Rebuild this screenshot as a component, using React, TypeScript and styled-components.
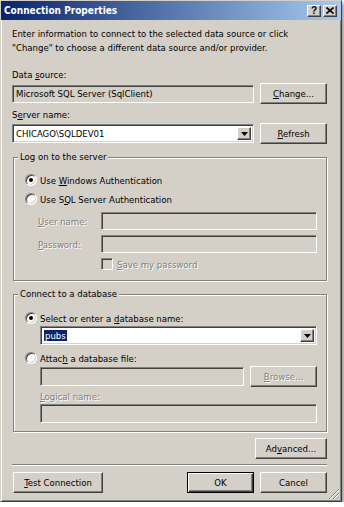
import React from 'react';
import styled, { createGlobalStyle, css } from 'styled-components';

const FACE = '#d4d0c8';
const SHADOW = '#808080';
const DARK = '#404040';

const GlobalStyle = createGlobalStyle`
  html, body { margin: 0; padding: 0; background: #fff; }
  body {
    font-family: "DejaVu Sans Condensed", "Liberation Sans", sans-serif;
    font-size: 9.5px;
    color: #000;
  }
`;

const sunken = css`
  box-sizing: border-box;
  border: 1px solid;
  border-color: ${SHADOW} #fff #fff ${SHADOW};
  box-shadow: inset 1px 1px ${DARK}, inset -1px -1px ${FACE};
`;

const raised = css`
  box-sizing: border-box;
  background: ${FACE};
  border: 1px solid;
  border-color: #fff ${DARK} ${DARK} #fff;
  box-shadow: inset -1px -1px ${SHADOW};
`;

const Window = styled.div`
  position: relative;
  width: 342px;
  height: 502px;
  box-sizing: border-box;
  background: ${FACE};
  border: 1px solid;
  border-color: ${FACE} ${DARK} ${DARK} ${FACE};
  box-shadow: inset 1px 1px #fff, inset -1px -1px ${SHADOW}, 2px 3px 4px rgba(0, 0, 0, 0.45);
  display: flex;
  flex-direction: column;
`;

const TitleBar = styled.div`
  height: 19px;
  display: flex;
  align-items: center;
  padding: 0 4px 0 3px;
  background: linear-gradient(to right, #0a246a, #a6caf0);
  color: #fff;
  font-weight: bold;
  font-size: 10px;
`;

const TitleText = styled.span`
  flex: 1;
`;

const TitleButton = styled.div`
  ${raised};
  width: 14px;
  height: 12px;
  margin-left: 2px;
  display: flex;
  align-items: center;
  justify-content: center;
  color: #000;
  font-family: "Liberation Sans", sans-serif;
  font-size: 10px;
  font-weight: bold;
  line-height: 1;
`;

const Content = styled.div`
  flex: 1;
  display: flex;
  flex-direction: column;
  padding: 0 14px 0 11px;
`;

const Intro = styled.p`
  margin: 7px 0 0 0;
  line-height: 14px;
`;

const Label = styled.div<{ $top: number; $disabled?: boolean }>`
  margin-top: ${p => p.$top}px;
  line-height: 14px;
  ${p => p.$disabled && disabledText};
`;

const disabledText = css`
  color: ${SHADOW};
  text-shadow: 1px 1px #fff;
`;

const Key = styled.span`
  text-decoration: underline;
`;

const Row = styled.div<{ $top?: number; $indent?: number }>`
  display: flex;
  align-items: center;
  gap: 6px;
  margin-top: ${p => p.$top ?? 0}px;
  margin-left: ${p => p.$indent ?? 0}px;
`;

const TextBox = styled.div<{ $grey?: boolean; $h?: number; $w?: number }>`
  ${sunken};
  ${p => (p.$w ? `width: ${p.$w}px; flex: none;` : 'flex: 1;')}
  height: ${p => p.$h ?? 18}px;
  background: ${p => (p.$grey ? FACE : '#fff')};
  display: flex;
  align-items: center;
  padding: 0 3px;
  white-space: nowrap;
`;

const Combo = styled.div`
  ${sunken};
  flex: 1;
  height: 19px;
  background: #fff;
  display: flex;
  align-items: center;
  padding: 2px;
`;

const ComboValue = styled.div`
  flex: 1;
  padding-left: 1px;
`;

const Selected = styled.span`
  background: #0a246a;
  color: #fff;
  padding: 0 1px;
`;

const ComboArrow = styled.div`
  ${raised};
  width: 14px;
  height: 100%;
  display: flex;
  align-items: center;
  justify-content: center;
`;

const Button = styled.button<{ $w: number; $default?: boolean; $disabled?: boolean }>`
  ${raised};
  width: ${p => p.$w}px;
  height: 21px;
  flex: none;
  padding: 0;
  font: inherit;
  color: #000;
  ${p => p.$disabled && disabledText};
  ${p =>
    p.$default &&
    css`
      border-color: #000;
      box-shadow: inset 1px 1px #fff, inset -1px -1px ${DARK}, inset -2px -2px ${SHADOW};
    `}
`;

const Group = styled.fieldset<{ $top: number; $pt: number; $pb: number }>`
  margin: ${p => p.$top}px 0 0 1px;
  padding: ${p => p.$pt}px 9px ${p => p.$pb}px 11px;
  min-inline-size: 0;
  border: 1px solid ${SHADOW};
  box-shadow: inset 1px 1px #fff, 1px 1px #fff;
`;

const Legend = styled.legend`
  margin-left: -7px;
  padding: 0 2px;
  line-height: 14px;
  background: ${FACE};
`;

const RadioRow = styled.div<{ $top?: number }>`
  display: flex;
  align-items: center;
  gap: 3px;
  height: 16px;
  margin-top: ${p => p.$top ?? 0}px;
`;

const RadioDot = styled.span<{ $checked?: boolean }>`
  width: 12px;
  height: 12px;
  flex: none;
  box-sizing: border-box;
  border-radius: 50%;
  background: #fff;
  border: 1px solid;
  border-color: ${SHADOW} #fff #fff ${SHADOW};
  box-shadow: inset 1px 1px ${DARK}, inset -1px -1px ${FACE};
  display: flex;
  align-items: center;
  justify-content: center;
  &::after {
    content: '';
    width: 4px;
    height: 4px;
    border-radius: 50%;
    background: ${p => (p.$checked ? '#000' : 'transparent')};
  }
`;

const FieldLabel = styled.span`
  width: 57px;
  flex: none;
  ${disabledText};
`;

const CheckRow = styled.div<{ $top: number }>`
  display: flex;
  align-items: center;
  gap: 4px;
  height: 14px;
  margin: ${p => p.$top}px 0 0 76px;
  ${disabledText};
`;

const CheckBox = styled.span`
  ${sunken};
  width: 12px;
  height: 12px;
  background: ${FACE};
  flex: none;
`;

const ActionRow = styled.div`
  display: flex;
  justify-content: flex-end;
  margin-top: 6px;
`;

const Separator = styled.div`
  margin: 5px 0 0 0;
  height: 0;
  border-top: 1px solid ${SHADOW};
  border-bottom: 1px solid #fff;
`;

const Footer = styled.div`
  display: flex;
  align-items: center;
  gap: 6px;
  margin: 6px 0 0 1px;
`;

const Spacer = styled.div`
  flex: 1;
`;

const Grip = styled.svg`
  position: absolute;
  right: 1px;
  bottom: 1px;
`;

const Arrow = () => (
  <svg width="7" height="4" viewBox="0 0 7 4">
    <path d="M0 0h7L3.5 4z" fill="#000" />
  </svg>
);

export default function App() {
  return (
    <>
      <GlobalStyle />
      <Window>
        <TitleBar>
          <TitleText>Connection Properties</TitleText>
          <TitleButton>?</TitleButton>
          <TitleButton>
            <svg width="8" height="7" viewBox="0 0 8 7">
              <path d="M0.5 0.5l7 6M7.5 0.5l-7 6" stroke="#000" strokeWidth="1.6" />
            </svg>
          </TitleButton>
        </TitleBar>
        <Content>
          <Intro>
            Enter information to connect to the selected data source or click
            <br />
            "Change" to choose a different data source and/or provider.
          </Intro>

          <Label $top={13}>
            Data <Key>s</Key>ource:
          </Label>
          <Row $top={1}>
            <TextBox $grey>Microsoft SQL Server (SqlClient)</TextBox>
            <Button $w={67}>
              <Key>C</Key>hange...
            </Button>
          </Row>

          <Label $top={4}>
            S<Key>e</Key>rver name:
          </Label>
          <Row $top={1}>
            <Combo>
              <ComboValue>CHICAGO\SQLDEV01</ComboValue>
              <ComboArrow>
                <Arrow />
              </ComboArrow>
            </Combo>
            <Button $w={67}>
              <Key>R</Key>efresh
            </Button>
          </Row>

          <Group $top={6} $pt={8} $pb={9}>
            <Legend>Log on to the server</Legend>
            <RadioRow>
              <RadioDot $checked />
              <span>
                Use <Key>W</Key>indows Authentication
              </span>
            </RadioRow>
            <RadioRow $top={3}>
              <RadioDot />
              <span>
                Use S<Key>Q</Key>L Server Authentication
              </span>
            </RadioRow>
            <Row $top={5} $indent={13}>
              <FieldLabel>
                <Key>U</Key>ser name:
              </FieldLabel>
              <TextBox $grey />
            </Row>
            <Row $top={5} $indent={13}>
              <FieldLabel>
                <Key>P</Key>assword:
              </FieldLabel>
              <TextBox $grey />
            </Row>
            <CheckRow $top={4}>
              <CheckBox />
              <span>
                <Key>S</Key>ave my password
              </span>
            </CheckRow>
          </Group>

          <Group $top={6} $pt={9} $pb={8}>
            <Legend>Connect to a database</Legend>
            <RadioRow>
              <RadioDot $checked />
              <span>
                Select or enter a <Key>d</Key>atabase name:
              </span>
            </RadioRow>
            <Row $indent={15}>
              <Combo>
                <ComboValue>
                  <Selected>pubs</Selected>
                </ComboValue>
                <ComboArrow>
                  <Arrow />
                </ComboArrow>
              </Combo>
            </Row>
            <RadioRow $top={5}>
              <RadioDot />
              <span>
                Attac<Key>h</Key> a database file:
              </span>
            </RadioRow>
            <Row $indent={15}>
              <TextBox $grey $h={19} />
              <Button $w={67} $disabled>
                <Key>B</Key>rowse...
              </Button>
            </Row>
            <Label $top={3} $disabled style={{ marginLeft: 15 }}>
              <Key>L</Key>ogical name:
            </Label>
            <Row $indent={15}>
              <TextBox $grey $h={19} />
            </Row>
          </Group>

          <ActionRow>
            <Button $w={72}>
              Ad<Key>v</Key>anced...
            </Button>
          </ActionRow>
          <Separator />
          <Footer>
            <Button $w={90}>
              <Key>T</Key>est Connection
            </Button>
            <Spacer />
            <Button $w={67} $default>
              OK
            </Button>
            <Button $w={67}>Cancel</Button>
          </Footer>
        </Content>
        <Grip width="12" height="12" viewBox="0 0 12 12">
          <path d="M11 1L1 11M11 5L5 11M11 9L9 11" stroke={SHADOW} strokeWidth="1" />
          <path d="M11 2L2 11M11 6L6 11M11 10L10 11" stroke="#fff" strokeWidth="1" />
        </Grip>
      </Window>
    </>
  );
}
